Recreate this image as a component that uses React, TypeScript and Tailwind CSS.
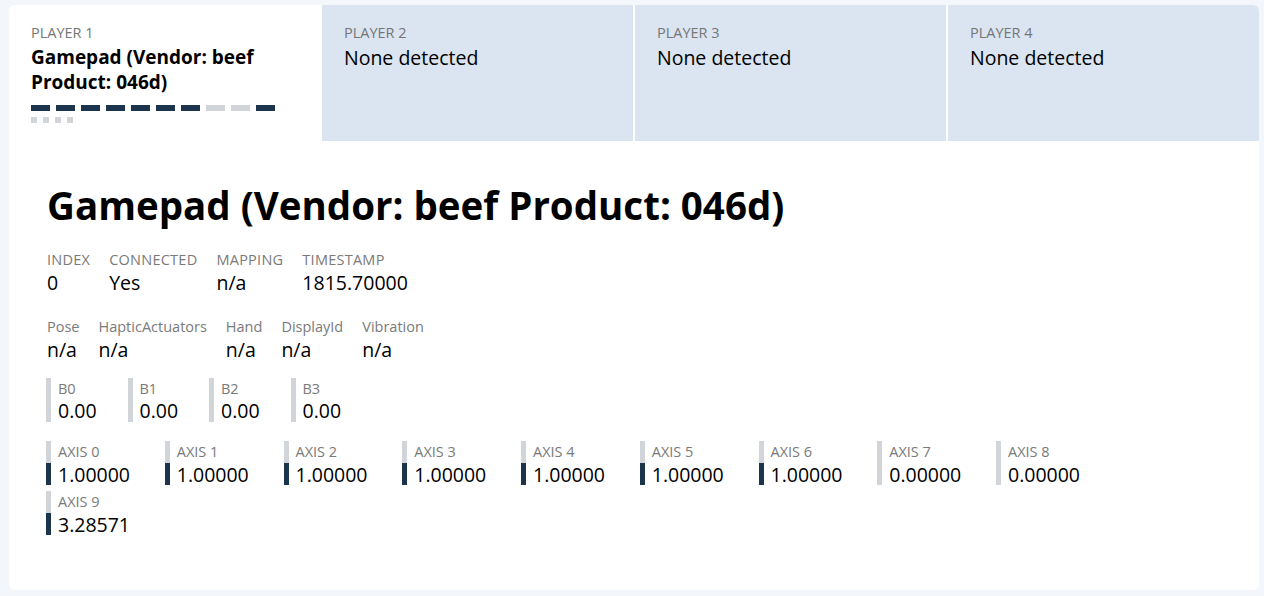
import React from "react";

const font = { fontFamily: '"Open Sans", "Noto Sans", sans-serif' };

function Tab({ n, children, active }: { n: number; children: React.ReactNode; active?: boolean }) {
  return (
    <div
      className={
        "flex-1 h-[136px] pl-[22px] pr-4 pt-[17px] " +
        (active ? "bg-white rounded-tl-[6px]" : "bg-[#dae5f1] border-l-2 border-white")
      }
    >
      <div className="text-[14.5px] leading-[22px] text-[#767676]">PLAYER {n}</div>
      {children}
    </div>
  );
}

function Field({ label, value, upper }: { label: string; value: string; upper?: boolean }) {
  return (
    <div className="flex flex-col">
      <div className={"text-[14.5px] leading-[20px] text-[#7a7a7a] " + (upper ? "uppercase tracking-[0.25px]" : "")}>{label}</div>
      <div className="text-[19.5px] leading-[26px] text-black">{value}</div>
    </div>
  );
}

function Button({ label }: { label: string }) {
  return (
    <div className="flex w-[81.5px] h-[44px]">
      <div className="w-[5px] h-full bg-[#d1d5da]" />
      <div className="pl-[7px] flex flex-col">
        <div className="text-[14.5px] leading-[22px] text-[#7a7a7a]">{label}</div>
        <div className="text-[19.5px] leading-[22px] text-black">0.00</div>
      </div>
    </div>
  );
}

function Axis({ label, value, on }: { label: string; value: string; on: boolean }) {
  return (
    <div className="flex w-[118.75px] h-[44px]">
      <div className="w-[5px] h-full flex flex-col">
        <div className="flex-1 bg-[#d1d5da]" />
        <div className={"flex-1 " + (on ? "bg-[#1d344d]" : "bg-[#d1d5da]")} />
      </div>
      <div className="pl-[7px] flex flex-col">
        <div className="text-[14.5px] leading-[22px] text-[#7a7a7a]">{label}</div>
        <div className="text-[19.5px] leading-[23px] text-black">{value}</div>
      </div>
    </div>
  );
}

export default function App() {
  const dashes = [1, 1, 1, 1, 1, 1, 1, 0, 0, 1];
  const axes: [string, boolean][] = [
    ["1.00000", true],
    ["1.00000", true],
    ["1.00000", true],
    ["1.00000", true],
    ["1.00000", true],
    ["1.00000", true],
    ["1.00000", true],
    ["0.00000", false],
    ["0.00000", false],
    ["3.28571", true],
  ];
  return (
    <div className="min-h-[596px] bg-[#f3f6fb] pt-[5px] pl-[9px] pr-[5px] pb-[6px]" style={font}>
      <div className="bg-white rounded-[6px] overflow-hidden">
        <div className="flex">
          <Tab n={1} active>
            <div className="text-[19px] leading-[25px] font-bold text-black mt-[1px]">
              Gamepad (Vendor: beef
              <br />
              Product: 046d)
            </div>
            <div className="flex gap-[6px] mt-[10px]">
              {dashes.map((d, i) => (
                <div key={i} className={"w-[19px] h-[6px] " + (d ? "bg-[#1d344d]" : "bg-[#d1d5da]")} />
              ))}
            </div>
            <div className="flex gap-[6px] mt-[6px]">
              {[0, 1, 2, 3].map((i) => (
                <div key={i} className="w-[6px] h-[6px] bg-[#d1d5da]" />
              ))}
            </div>
          </Tab>
          <Tab n={2}>
            <div className="text-[19.5px] leading-[25px] text-black mt-[1px]">None detected</div>
          </Tab>
          <Tab n={3}>
            <div className="text-[19.5px] leading-[25px] text-black mt-[1px]">None detected</div>
          </Tab>
          <Tab n={4}>
            <div className="text-[19.5px] leading-[25px] text-black mt-[1px]">None detected</div>
          </Tab>
        </div>
        <div className="px-[38px] pt-[40px] h-[449px]">
          <h1 className="text-[38.5px] leading-[48px] font-bold text-black">Gamepad (Vendor: beef Product: 046d)</h1>
          <div className="flex gap-x-[19px] mt-[21px]">
            <Field label="Index" value="0" upper />
            <Field label="Connected" value="Yes" upper />
            <Field label="Mapping" value="n/a" upper />
            <Field label="Timestamp" value="1815.70000" upper />
          </div>
          <div className="flex gap-x-[19px] mt-[21px]">
            <Field label="Pose" value="n/a" />
            <Field label="HapticActuators" value="n/a" />
            <Field label="Hand" value="n/a" />
            <Field label="DisplayId" value="n/a" />
            <Field label="Vibration" value="n/a" />
          </div>
          <div className="flex mt-[15px] -ml-[1px]">
            {["B0", "B1", "B2", "B3"].map((b) => (
              <Button key={b} label={b} />
            ))}
          </div>
          <div className="flex flex-wrap gap-y-[6px] mt-[19px] -ml-[1px]">
            {axes.map(([v, on], i) => (
              <Axis key={i} label={"AXIS " + i} value={v} on={on} />
            ))}
          </div>
        </div>
      </div>
    </div>
  );
}
